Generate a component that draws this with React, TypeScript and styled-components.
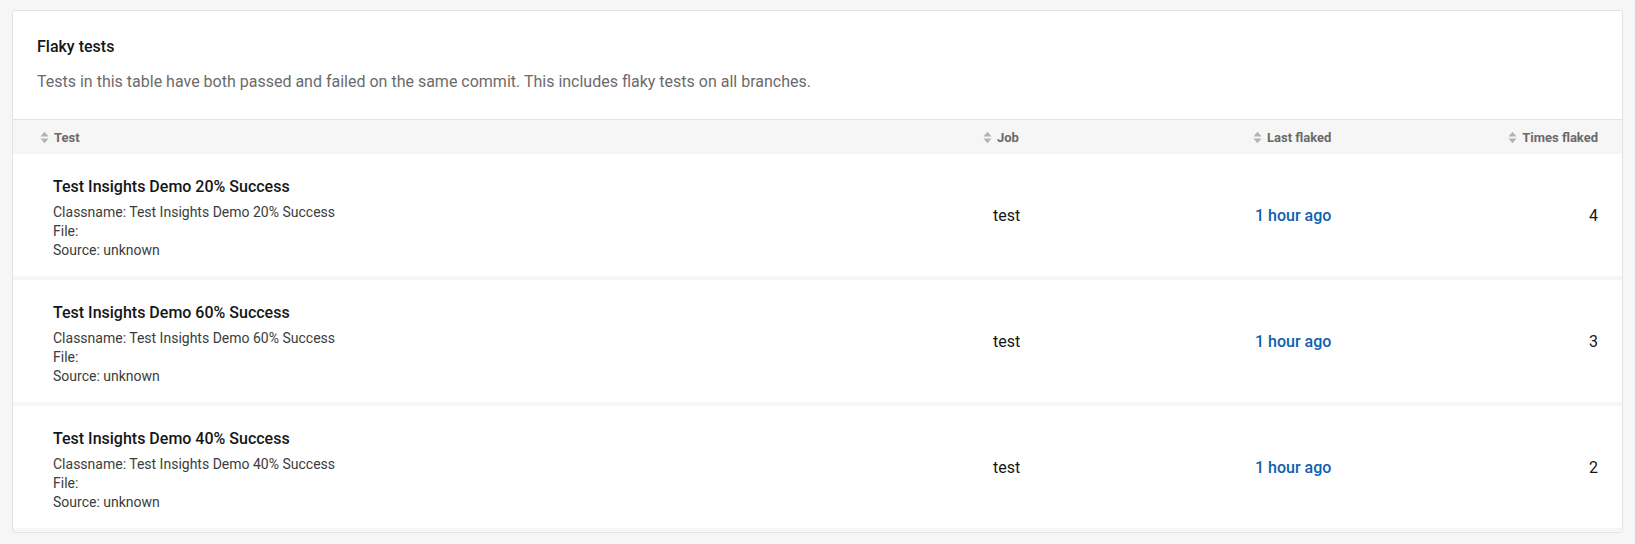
import React from "react";
import styled, { createGlobalStyle } from "styled-components";

const Global = createGlobalStyle`
  html, body { margin: 0; padding: 0; background: #f6f6f6; }
  body { font-family: Roboto, "Noto Sans", Arial, sans-serif; color: #161616; -webkit-font-smoothing: antialiased; }
`;

const Page = styled.div`
  padding: 10px 12px 12px 12px;
`;

const Card = styled.section`
  background: #fff;
  border: 1px solid #e2e2e2;
  border-radius: 3px;
  overflow: hidden;
`;

const Intro = styled.div`
  padding: 25px 24px 26px 24px;
  border-bottom: 1px solid #e2e2e2;
`;

const Title = styled.h2`
  margin: 0;
  font-size: 16px;
  line-height: 22px;
  font-weight: 500;
  color: #161616;
`;

const Desc = styled.p`
  margin: 13px 0 0 0;
  font-size: 16px;
  line-height: 22px;
  color: #6b6b6b;
`;

const cols = "970px 270px 180px 1fr";

const HeadRow = styled.div`
  display: grid;
  grid-template-columns: ${cols};
  height: 34px;
  align-items: center;
  background: #f6f6f6;
`;

const HeadCell = styled.div<{ $pad: number; $right?: boolean }>`
  display: flex;
  align-items: center;
  gap: 5px;
  justify-content: ${(p) => (p.$right ? "flex-end" : "flex-start")};
  padding-left: ${(p) => p.$pad}px;
  padding-right: ${(p) => (p.$right ? 24 : 0)}px;
  font-size: 13px;
  font-weight: 700;
  color: #6a6a6a;
`;

const Row = styled.div`
  display: grid;
  grid-template-columns: ${cols};
  align-items: center;
  min-height: 126px;
  border-bottom: 4px solid #f6f6f6;
  box-sizing: border-box;
`;

const TestCell = styled.div`
  padding: 22px 0 16px 40px;
`;

const TestName = styled.div`
  font-size: 16px;
  line-height: 22px;
  font-weight: 500;
  color: #161616;
  margin-bottom: 5px;
`;

const Meta = styled.div`
  font-size: 14px;
  line-height: 19px;
  color: #3c3c3c;
`;

const Cell = styled.div<{ $pad: number; $right?: boolean }>`
  padding-left: ${(p) => p.$pad}px;
  padding-right: ${(p) => (p.$right ? 24 : 0)}px;
  text-align: ${(p) => (p.$right ? "right" : "left")};
  font-size: 16px;
  color: #161616;
`;

const TimeLink = styled.a`
  font-size: 16px;
  font-weight: 500;
  color: #0e5fae;
  text-decoration: none;
`;

const SortIcon = () => (
  <svg width="9" height="13" viewBox="0 0 9 13" aria-hidden="true">
    <path d="M4.5 0.8 L8.5 5.4 L0.5 5.4 Z" fill="#b3b3b3" />
    <path d="M4.5 12.2 L8.5 7.6 L0.5 7.6 Z" fill="#b3b3b3" />
  </svg>
);

const rows = [
  { name: "Test Insights Demo 20% Success", times: 4 },
  { name: "Test Insights Demo 60% Success", times: 3 },
  { name: "Test Insights Demo 40% Success", times: 2 },
];

export default function App() {
  return (
    <>
      <Global />
      <Page>
        <Card>
          <Intro>
            <Title>Flaky tests</Title>
            <Desc>
              Tests in this table have both passed and failed on the same commit. This includes flaky
              tests on all branches.
            </Desc>
          </Intro>
          <HeadRow>
            <HeadCell $pad={27}>
              <SortIcon />
              Test
            </HeadCell>
            <HeadCell $pad={0}>
              <SortIcon />
              Job
            </HeadCell>
            <HeadCell $pad={0}>
              <SortIcon />
              Last flaked
            </HeadCell>
            <HeadCell $pad={0} $right>
              <SortIcon />
              Times flaked
            </HeadCell>
          </HeadRow>
          {rows.map((r) => (
            <Row key={r.name}>
              <TestCell>
                <TestName>{r.name}</TestName>
                <Meta>Classname: {r.name}</Meta>
                <Meta>File:</Meta>
                <Meta>Source: unknown</Meta>
              </TestCell>
              <Cell $pad={10}>test</Cell>
              <Cell $pad={2}>
                <TimeLink href="#">1 hour ago</TimeLink>
              </Cell>
              <Cell $pad={0} $right>
                {r.times}
              </Cell>
            </Row>
          ))}
        </Card>
      </Page>
    </>
  );
}
